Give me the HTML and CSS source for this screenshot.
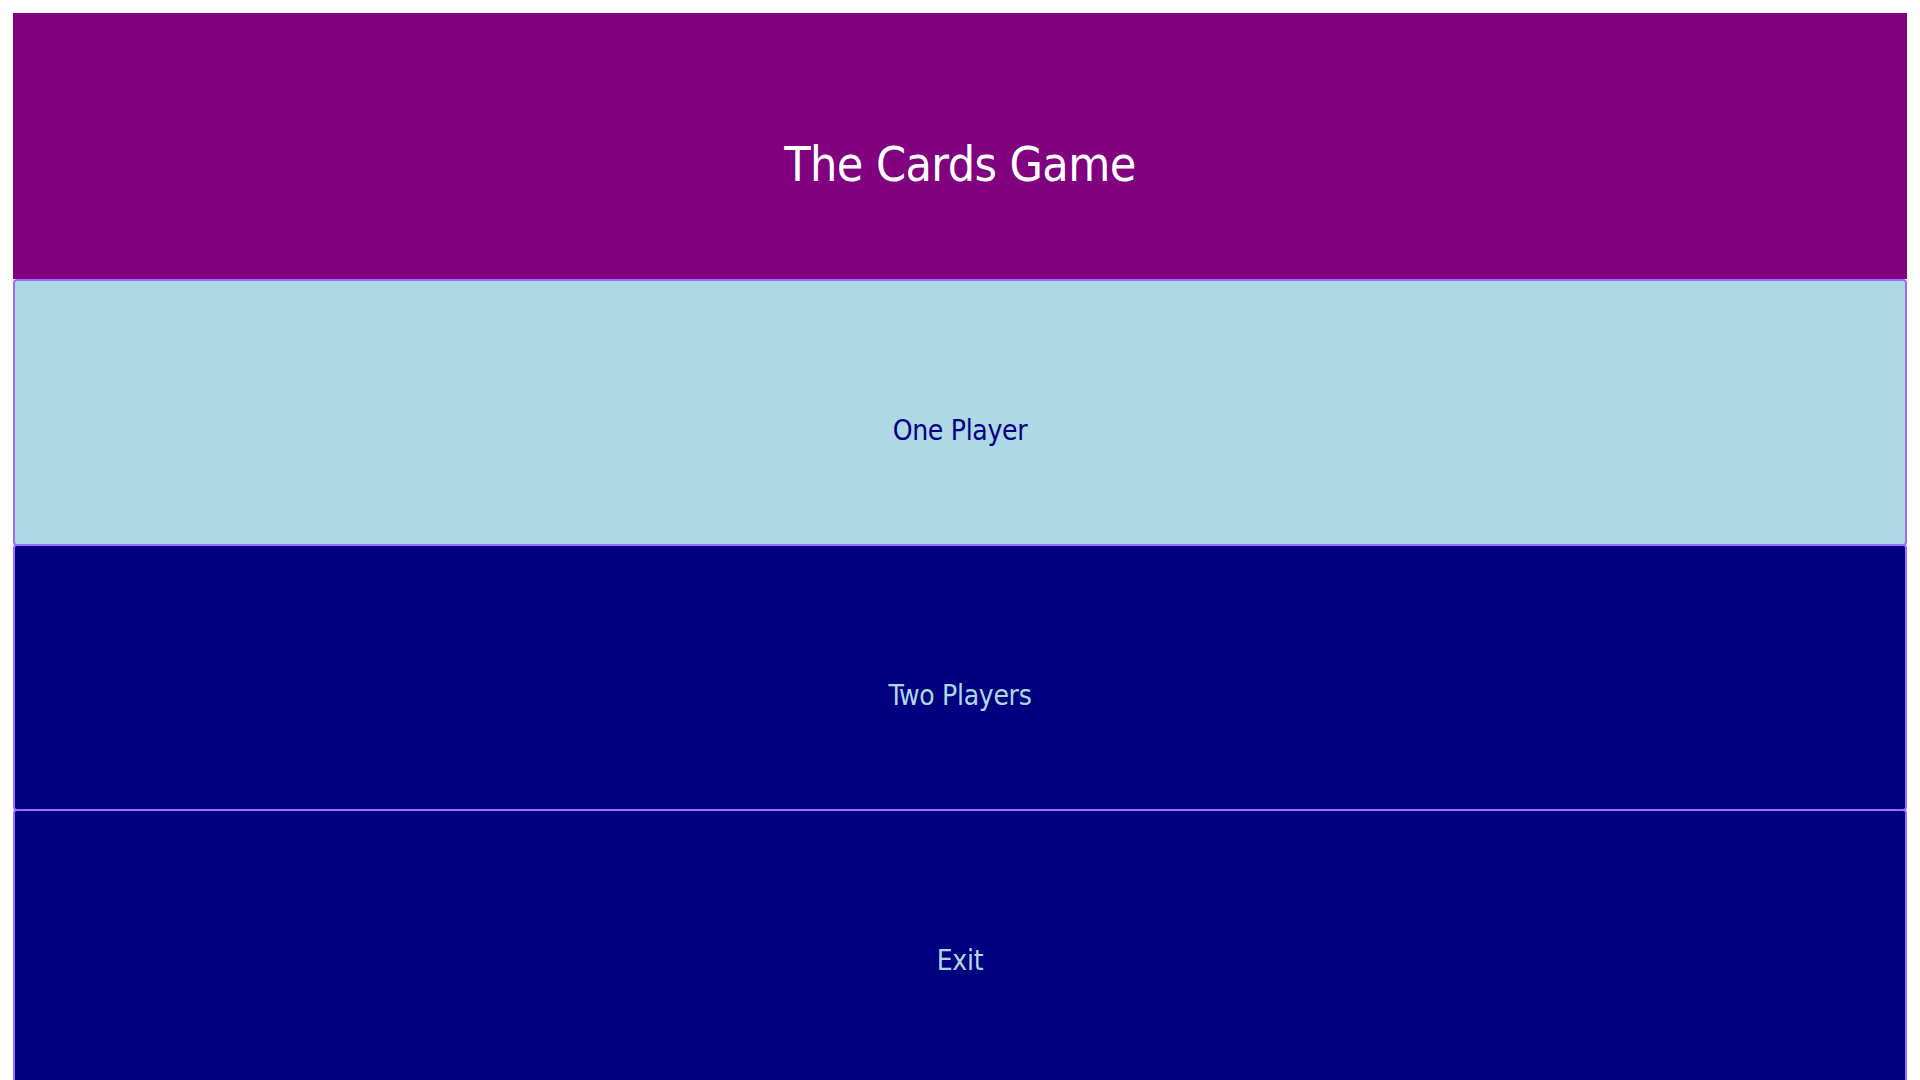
FILE: index.html
```html
<!DOCTYPE html>
<html lang="en">
<head>
<meta charset="utf-8">
<title>The Cards Game</title>
<link rel="stylesheet" href="styles.css">
</head>
<body>
<main class="menu">
  <header class="menu-header">
    <h1 class="menu-title">The Cards Game</h1>
  </header>
  <button class="menu-btn menu-btn--active">One Player</button>
  <button class="menu-btn">Two Players</button>
  <button class="menu-btn menu-btn--last">Exit</button>
</main>
</body>
</html>
```

FILE: styles.css
```css
html, body {
  margin: 0;
  padding: 0;
  background: #ffffff;
}

body {
  font-family: "DejaVu Sans", Verdana, sans-serif;
  font-stretch: condensed;
  overflow: hidden;
}

.menu {
  display: flex;
  flex-direction: column;
  padding: 13px 13px 0 13px;
}

.menu-header {
  height: 266px;
  background: #800080;
  display: flex;
  align-items: center;
  justify-content: center;
  padding-top: 36px;
  box-sizing: border-box;
}

.menu-title {
  margin: 0;
  color: #ffffff;
  font-size: 48px;
  font-weight: normal;
  letter-spacing: -0.6px;
}

.menu-btn {
  position: relative;
  height: 267px;
  margin: 0;
  padding: 36px 0 0 0;
  box-sizing: border-box;
  border: 2px solid #9a6cff;
  border-radius: 4px;
  background: #000080;
  color: #add8e6;
  font-family: "DejaVu Sans", Verdana, sans-serif;
  font-stretch: condensed;
  font-size: 28px;
  letter-spacing: -0.3px;
  display: flex;
  align-items: center;
  justify-content: center;
  cursor: pointer;
}

.menu-btn + .menu-btn {
  margin-top: -2px;
}

.menu-btn--active {
  background: #add8e6;
  color: #000080;
}

.menu-btn--last {
  height: 300px;
  padding-bottom: 33px;
}
```
